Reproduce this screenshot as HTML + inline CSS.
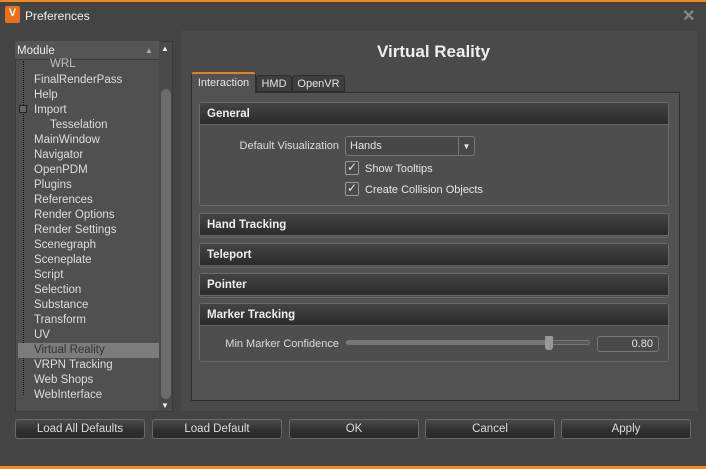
<!DOCTYPE html><html><head><style>
*{box-sizing:border-box;margin:0;padding:0}
body{width:706px;height:469px;background:#444;font-family:"Liberation Sans",sans-serif;font-size:11px;color:#e6e6e6;position:relative;overflow:hidden}
.a{position:absolute}
.btn{position:absolute;top:419px;height:20px;border:1px solid #6a6a6a;border-radius:3px;background:linear-gradient(#4a4a4a,#2f2f2f 60%,#2a2a2a);text-align:center;line-height:19px;color:#ddd;font-size:11.5px}
.grp{position:absolute;left:199px;width:470px;border:1px solid #6a6a6a;border-radius:3px;background:#4e4e4e}
.gh{height:22px;background:linear-gradient(#444,#2b2b2b);font-weight:bold;padding-left:7px;line-height:23px;color:#eee;border-bottom:1px solid #666;font-size:11.5px}
.tr{position:absolute;left:34px;color:#ddd;font-size:11.5px;margin-top:2px}
.chk{position:absolute;width:14px;height:14px;border:1px solid #999;border-radius:2px;background:#4a4a4a}
</style></head><body>
<div class="a" style="left:0;top:0;width:706px;height:2px;background:#f08a1c"></div>
<div class="a" style="left:0;top:466px;width:706px;height:3px;background:#f08a1c"></div>
<div class="a" style="left:5px;top:6px;width:15px;height:17px;background:#e8701a;border-radius:2px;color:#fff;font-weight:bold;font-size:11px;text-align:center;line-height:14px">V</div>
<div class="a" style="left:25px;top:9px;font-size:12px;color:#f0f0f0">Preferences</div>
<div class="a" style="left:682px;top:6px;font-size:16px;color:#888;font-weight:bold">✕</div>
<div class="a" style="left:181px;top:31px;width:517px;height:380px;background:#4a4a4a"></div>
<div class="a" style="left:15px;top:41px;width:158px;height:371px;background:#505050;border:1px solid #3a3a3a"></div>
<div class="a" style="left:15px;top:41px;width:144px;height:19px;background:#555;border-bottom:1px solid #3a3a3a;padding-left:2px;line-height:20px;color:#eee;font-size:11.5px">Module<span style="position:absolute;left:130px;top:0;font-size:8px;color:#aaa">▲</span></div>
<div class="a" style="left:159px;top:42px;width:13px;height:369px;background:#4a4a4a"></div>
<div class="a" style="left:161px;top:89px;width:10px;height:310px;background:#6c6c6c;border-radius:5px"></div>
<div class="a" style="left:161px;top:44px;font-size:8px;color:#eee">▲</div>
<div class="a" style="left:161px;top:401px;font-size:8px;color:#eee">▼</div>
<div class="a" style="left:23px;top:61px;height:334px;border-left:1px dotted #111"></div>
<div class="a" style="left:18px;top:343px;width:141px;height:15px;background:#7c7c7c"></div>
<div class="tr" style="left:50px;top:56px;opacity:.8">WRL</div>
<div class="tr" style="top:72px">FinalRenderPass</div>
<div class="tr" style="top:87px">Help</div>
<div class="tr" style="top:102px">Import</div>
<div class="a" style="left:19px;top:105px;width:8px;height:8px;border:1px solid #222;background:#666"></div>
<div class="tr" style="left:50px;top:117px">Tesselation</div>
<div class="tr" style="top:132px">MainWindow</div>
<div class="tr" style="top:147px">Navigator</div>
<div class="tr" style="top:162px">OpenPDM</div>
<div class="tr" style="top:177px">Plugins</div>
<div class="tr" style="top:192px">References</div>
<div class="tr" style="top:207px">Render Options</div>
<div class="tr" style="top:222px">Render Settings</div>
<div class="tr" style="top:237px">Scenegraph</div>
<div class="tr" style="top:252px">Sceneplate</div>
<div class="tr" style="top:267px">Script</div>
<div class="tr" style="top:282px">Selection</div>
<div class="tr" style="top:297px">Substance</div>
<div class="tr" style="top:312px">Transform</div>
<div class="tr" style="top:327px">UV</div>
<div class="tr" style="top:342px;color:#333">Virtual Reality</div>
<div class="tr" style="top:357px">VRPN Tracking</div>
<div class="tr" style="top:372px">Web Shops</div>
<div class="tr" style="top:387px">WebInterface</div>
<div class="a" style="left:181px;top:42px;width:505px;text-align:center;font-size:17px;font-weight:bold;color:#eee">Virtual Reality</div>
<div class="a" style="left:191px;top:92px;width:489px;height:309px;background:#525252;border:1px solid #2e2e2e"></div>
<div class="a" style="left:191px;top:72px;width:65px;height:21px;background:#525252;border:1px solid #2e2e2e;border-bottom:none;border-top:2px solid #e8801c;border-radius:3px 3px 0 0;text-align:center;line-height:19px">Interaction</div>
<div class="a" style="left:256px;top:75px;width:36px;height:17px;background:#3e3e3e;border:1px solid #2e2e2e;border-radius:3px 3px 0 0;text-align:center;line-height:17px">HMD</div>
<div class="a" style="left:292px;top:75px;width:53px;height:17px;background:#3e3e3e;border:1px solid #2e2e2e;border-radius:3px 3px 0 0;text-align:center;line-height:17px">OpenVR</div>
<div class="grp" style="top:102px;height:104px"><div class="gh">General</div></div>
<div class="a" style="left:200px;width:139px;text-align:right;top:140px;color:#ddd">Default Visualization</div>
<div class="a" style="left:345px;top:136px;width:130px;height:20px;border:1px solid #777;border-radius:3px;background:#474747;padding-left:4px;line-height:19px">Hands<span style="position:absolute;left:112px;top:0;width:16px;border-left:1px solid #777;text-align:center;font-size:8px">▼</span></div>
<div class="chk" style="left:345px;top:161px"></div><div class="a" style="left:347px;top:160px;font-size:12px">✓</div>
<div class="a" style="left:365px;top:163px">Show Tooltips</div>
<div class="chk" style="left:345px;top:182px"></div><div class="a" style="left:347px;top:181px;font-size:12px">✓</div>
<div class="a" style="left:365px;top:184px">Create Collision Objects</div>
<div class="grp" style="top:213px;height:25px"><div class="gh">Hand Tracking</div></div>
<div class="grp" style="top:243px;height:25px"><div class="gh">Teleport</div></div>
<div class="grp" style="top:273px;height:25px"><div class="gh">Pointer</div></div>
<div class="grp" style="top:303px;height:59px"><div class="gh">Marker Tracking</div></div>
<div class="a" style="left:200px;width:139px;text-align:right;top:338px;color:#ddd">Min Marker Confidence</div>
<div class="a" style="left:346px;top:340px;width:244px;height:5px;border:1px solid #777;border-radius:3px;background:#5a5a5a"></div>
<div class="a" style="left:346px;top:341px;width:200px;height:3px;background:#777"></div>
<div class="a" style="left:545px;top:336px;width:8px;height:14px;background:#999;border-radius:1px 1px 3px 3px"></div>
<div class="a" style="left:597px;top:336px;width:62px;height:16px;border:1px solid #777;border-radius:3px;background:#4a4a4a;text-align:right;padding-right:5px;line-height:15px">0.80</div>
<div class="btn" style="left:15px;width:130px">Load All Defaults</div>
<div class="btn" style="left:152px;width:130px">Load Default</div>
<div class="btn" style="left:289px;width:130px">OK</div>
<div class="btn" style="left:425px;width:130px">Cancel</div>
<div class="btn" style="left:561px;width:130px">Apply</div>
</body></html>
